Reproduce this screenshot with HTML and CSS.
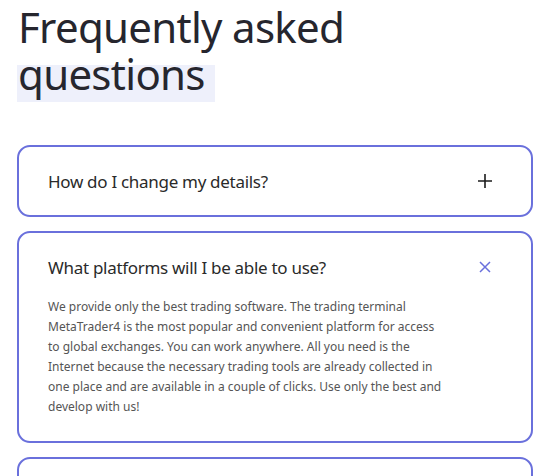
FILE: index.html
```html
<!DOCTYPE html>
<html lang="en">
<head>
<meta charset="utf-8">
<title>FAQ</title>
<link rel="stylesheet" href="styles.css">
</head>
<body>
<section class="faq">
  <h1 class="faq-title">Frequently asked <span class="mark">questions&nbsp;</span></h1>
  <div class="faq-list">
    <div class="card">
      <div class="card-head">
        <span class="q">How do I change my details?</span>
        <svg class="icon plus" width="16" height="16" viewBox="0 0 16 16"><path d="M8 1v14M1 8h14" stroke="#1c1c1c" stroke-width="1.6" fill="none"/></svg>
      </div>
    </div>
    <div class="card open">
      <div class="card-head">
        <span class="q">What platforms will I be able to use?</span>
        <svg class="icon close" width="16" height="16" viewBox="0 0 16 16"><path d="M3 3l10 10M13 3L3 13" stroke="#6a70dc" stroke-width="1.5" fill="none"/></svg>
      </div>
      <p class="answer">We provide only the best trading software. The trading terminal MetaTrader4 is the most popular and convenient platform for access to global exchanges. You can work anywhere. All you need is the Internet because the necessary trading tools are already collected in one place and are available in a couple of clicks. Use only the best and develop with us!</p>
    </div>
    <div class="card">
      <div class="card-head">
        <span class="q">How do I withdraw funds?</span>
        <svg class="icon plus" width="16" height="16" viewBox="0 0 16 16"><path d="M8 1v14M1 8h14" stroke="#1c1c1c" stroke-width="1.6" fill="none"/></svg>
      </div>
    </div>
  </div>
</section>
</body>
</html>
```

FILE: styles.css
```css
html, body {
  margin: 0;
  padding: 0;
  background: #ffffff;
}
.faq {
  padding: 0 21px 0 17px;
}
.faq-title {
  margin: 0 0 48px 1px;
  padding-top: 3px;
  font-family: "Noto Sans", sans-serif;
  font-weight: 400;
  font-size: 42px;
  line-height: 47px;
  color: #26262e;
  letter-spacing: -0.7px;
}
.mark {
  background: linear-gradient(to bottom, transparent 35%, #eef0fb 35%);
  padding-left: 1px;
  margin-left: -1px;
}
.faq-list {
  display: flex;
  flex-direction: column;
  gap: 14px;
}
.card {
  border: 2px solid #6a70dc;
  border-radius: 13px;
  padding: 22px 38px 22px 29px;
  background: #fff;
}
.card-head {
  display: flex;
  align-items: center;
  justify-content: space-between;
  height: 24px;
}
.q {
  font-family: "Noto Sans", sans-serif;
  font-size: 17px;
  letter-spacing: -0.3px;
  color: #2a2a2a;
}
.icon { flex: none; }
.answer {
  margin: 18px 0 2px;
  max-width: 395px;
  font-family: "Noto Sans", sans-serif;
  font-size: 12px;
  line-height: 20px;
  color: #555555;
}
```
